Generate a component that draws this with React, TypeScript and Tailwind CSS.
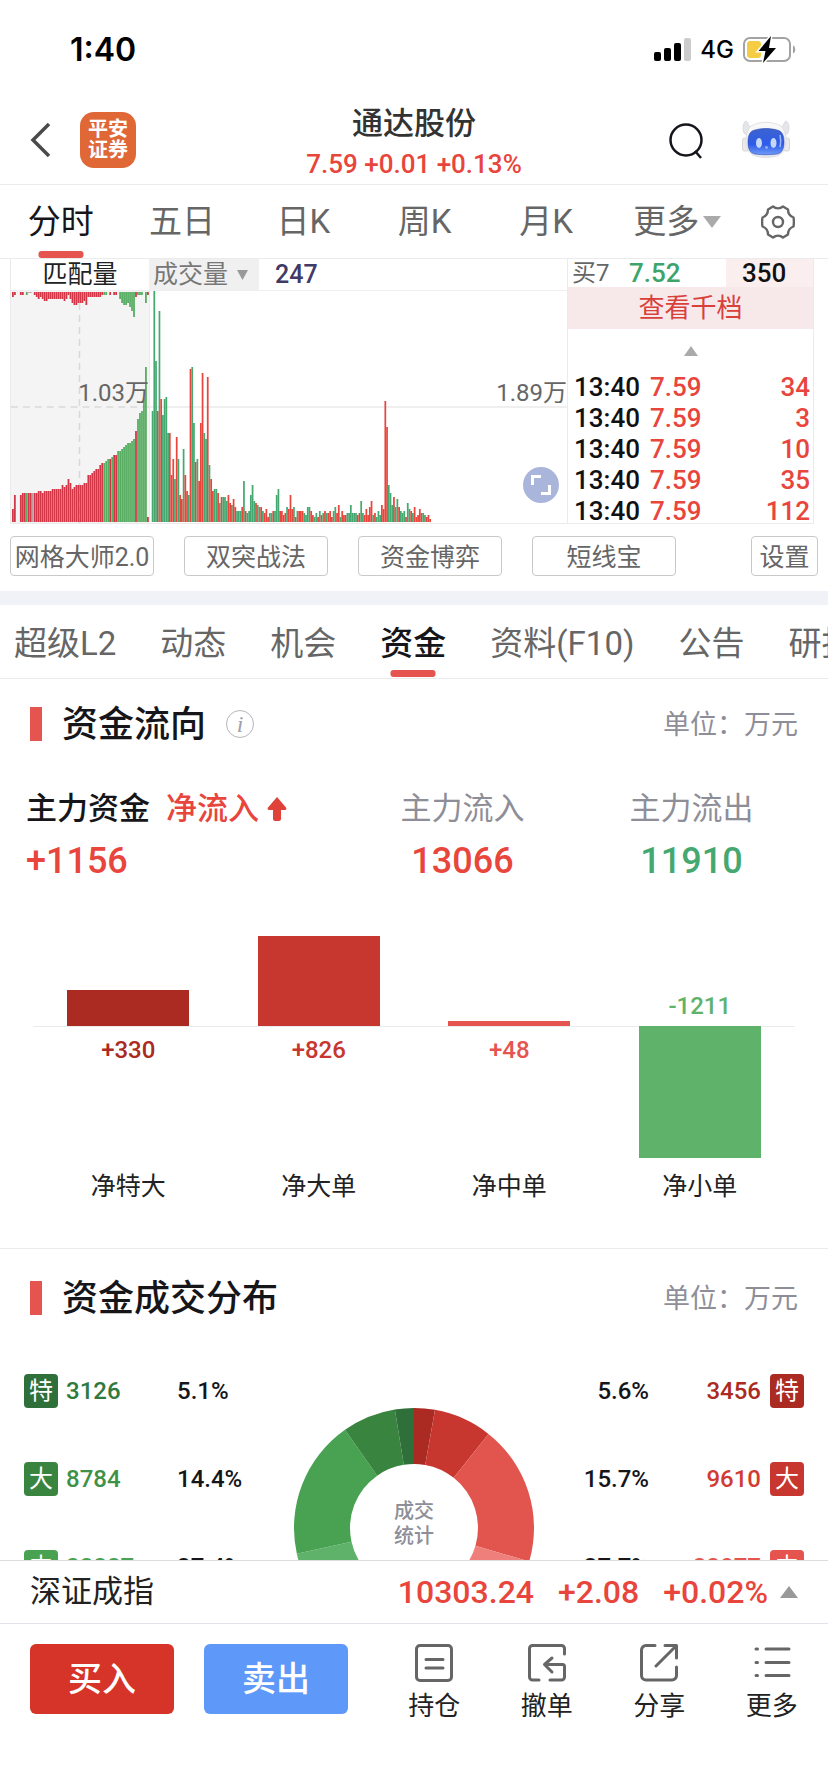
import clsx from "clsx";

const periods = ["分时", "五日", "日K", "周K", "月K"];

const strategies = ["网格大师2.0", "双突战法", "资金博弈", "短线宝"];

const sections = ["超级L2", "动态", "机会", "资金", "资料(F10)", "公告", "研报"];

const trades = [
  { key: "1", time: "13:40", price: "7.59", volume: "34" },
  { key: "2", time: "13:40", price: "7.59", volume: "3" },
  { key: "3", time: "13:40", price: "7.59", volume: "10" },
  { key: "4", time: "13:40", price: "7.59", volume: "35" },
  { key: "5", time: "13:40", price: "7.59", volume: "112" },
];

const flows = [
  { name: "净特大", value: 330, bar: "bg-[#ab2a21]", text: "text-[#ab2a21]" },
  { name: "净大单", value: 826, bar: "bg-[#c8372f]", text: "text-[#c8372f]" },
  { name: "净中单", value: 48, bar: "bg-[#e5544f]", text: "text-[#e5544f]" },
  { name: "净小单", value: -1211, bar: "bg-[#5fb26a]", text: "text-[#5fb26a]" },
];

const sells = [
  { label: "特", amount: "3126", percent: "5.1%", badge: "bg-[#2f6f3a]", text: "text-[#2f7a3c]" },
  { label: "大", amount: "8784", percent: "14.4%", badge: "bg-[#39843f]", text: "text-[#3f9148]" },
  { label: "中", amount: "22887", percent: "37.4%", badge: "bg-[#48a251]", text: "text-[#48a251]" },
];

const buys = [
  { label: "特", amount: "3456", percent: "5.6%", badge: "bg-[#ab2a21]", text: "text-[#ab2a21]" },
  { label: "大", amount: "9610", percent: "15.7%", badge: "bg-[#c8372f]", text: "text-[#d13b33]" },
  { label: "中", amount: "23077", percent: "37.7%", badge: "bg-[#e5544f]", text: "text-[#e5544f]" },
];

// Each side of the donut adds up to 100
const slices = [
  { percent: 5.6, color: "#ab2a21" },
  { percent: 15.7, color: "#c8372f" },
  { percent: 37.7, color: "#e2544e" },
  { percent: 41.0, color: "#ee7f7b" },
  { percent: 43.1, color: "#5fb26a" },
  { percent: 37.4, color: "#48a251" },
  { percent: 14.4, color: "#39843f" },
  { percent: 5.1, color: "#2f6f3a" },
];

// r = up, g = down, w = flat, followed by the bar height
const volumeBars =
  "g111 g231 g161 r111 g211 r123 g107 g123 g125 g89 r89 r47 r63 g43 r85 g63 r27 r23 g73 r47 r31 g27 r153 g155 g99 r60 g63 r41 r99 r149 g89 g83 r145 g57 r43 r31 g33 g33 r29 g19 r25 g25 g25 g21 r27 r19 g17 r23 r15 g11 g11 g11 r15 g41 r11 g9 g11 g27 g37 g21 r19 g17 g15 r15 g11 r9 r13 r5 g9 g9 r11 g11 g27 g33 r11 r11 r7 r9 g15 r13 r27 r13 g15 r5 g11 r11 r11 r11 g9 g7 g15 g15 r11 r7 g5 g9 r5 g11 r7 g9 r11 g9 r9 r11 r5 g11 g15 r9 r17 g5 r11 r7 r7 g9 g9 g17 g9 g9 g9 r7 r9 g21 g9 r7 r13 r7 r15 r21 g7 r9 g5 g11 g7 r17 r13 r121 r95 g37 g29 g17 r25 g15 g23 r15 g11 g9 g11 r5 g19 g13 r11 g9 r15 r5 r7 r13 r9 g9 g7 r5 r7 r3";

const matchBars =
  "r13 r27 r0 r0 r27 r29 r29 g29 r29 r29 w29 r29 r29 r31 r31 r29 r31 r31 r31 r31 r33 r33 r33 r33 r33 r37 r35 r37 r43 r39 r33 r35 r37 r37 r37 r37 r39 r39 r47 r47 r49 r51 r53 r53 r57 r59 g59 g61 g63 r63 g65 r67 r67 g71 g71 g73 g75 g77 g79 g79 g81 g83 r91 g103 g109 g111 g123 g155 r5";

const unmatchedBars =
  "r5 r3 r0 r0 r3 r3 r0 g3 w1 w1 r0 r3 r5 r7 r5 r7 r9 r9 r7 r7 r7 r7 r7 r7 r7 r7 r9 r7 r3 r7 r11 r13 r13 r11 r11 r11 r9 r13 r5 r5 r5 r5 r5 r5 r5 r3 g3 g3 g0 r3 g0 r3 r3 g0 g7 g11 g13 g13 g11 g15 g19 g25 r5 g3 g3 g3 g0 g11 r3";

function parseBars(data: string) {
  return data.split(" ").map((item) => ({ tone: item[0], height: Number(item.slice(1)) }));
}

function matchColor(tone: string) {
  if (tone === "g") return "#57ad62";
  return tone === "r" ? "#d13746" : "#b9a0a4";
}

function slicePath(from: number, to: number) {
  const point = (r: number, p: number) => {
    const a = (p / 200) * Math.PI * 2;
    return `${120 + r * Math.sin(a)} ${120 - r * Math.cos(a)}`;
  };
  return `M${point(120, from)}A120 120 0 0 1 ${point(120, to)}L${point(64, to)}A64 64 0 0 0 ${point(64, from)}Z`;
}

function StatusBar() {
  return (
    <div className="flex h-24 items-center justify-between pt-1 pr-8 pl-[70px] text-black">
      <span className="font-[Inter] text-[32px] font-semibold">1:40</span>
      <div className="flex items-center gap-2">
        <svg width="38" height="24" viewBox="0 0 38 24">
          <rect x="0" y="14" width="7" height="9" rx="2" />
          <rect x="10" y="10" width="7" height="13" rx="2" />
          <rect x="20" y="5" width="7" height="18" rx="2" />
          <rect x="30" y="0" width="7" height="23" rx="2" fill="#ccc" />
        </svg>
        <span className="font-[Inter] text-2xl font-medium">4G</span>
        <svg width="54" height="28" viewBox="0 0 54 28">
          <rect x="2" y="2" width="46" height="23" rx="6" fill="none" stroke="#a3a3a3" strokeWidth="2" />
          <rect x="5" y="5" width="14" height="17" rx="3" fill="#f5cd45" />
          <path d="M51 9.500c3 1 3 7 0 8z" fill="#a3a3a3" />
          <path d="M29 0 16.500 15h7L21 27l13-15h-7z" stroke="#fff" strokeWidth="3" />
          <path d="M29 0 16.500 15h7L21 27l13-15h-7z" />
        </svg>
      </div>
    </div>
  );
}

function RobotIcon() {
  return (
    <svg width="48" height="40" viewBox="0 0 48 40">
      <defs>
        <linearGradient id="face" x1="0" y1="0" x2="0" y2="1">
          <stop offset="0" stopColor="#3d63cf" />
          <stop offset="0.6" stopColor="#2f5bea" />
          <stop offset="1" stopColor="#6f9bf8" />
        </linearGradient>
        <linearGradient id="shell" x1="0" y1="0" x2="0" y2="1">
          <stop offset="0" stopColor="#fafafa" />
          <stop offset="1" stopColor="#e6e8ee" />
        </linearGradient>
      </defs>
      <path d="M2 13C0 8 1 3 4 1c2 1 2 4 4 6l4 1-6 8zM46 13c2-5 1-10-2-12-2 1-2 4-4 6l-4 1 6 8z" fill="#e4e6ea" stroke="#d3d5da" strokeWidth="0.8" />
      <rect x="0.500" y="18" width="6" height="13" rx="2" fill="#eceae9" stroke="#d0cfd0" strokeWidth="0.8" />
      <rect x="41.500" y="18" width="6" height="13" rx="2" fill="#eceae9" stroke="#d0cfd0" strokeWidth="0.8" />
      <path d="M9 6c9-5 21-5 30 0 3 3 5 8 5 13s-1 11-4 14c-6 6-26 6-32 0-3-3-4-9-4-14S6 9 9 6z" fill="url(#shell)" stroke="#d9dbe0" strokeWidth="0.8" />
      <path d="M13 10c7-2 15-2 22 0 5 1 7 5 7 12s-2 11-7 12c-7 1-15 1-22 0-5-1-7-5-7-12s2-11 7-12z" fill="url(#face)" stroke="#2a49b0" strokeWidth="0.6" />
      <path d="M38 15c1 4 1 8 0 12" fill="none" stroke="#9db7fb" strokeWidth="1.500" />
      <ellipse cx="17" cy="23" rx="3" ry="5" fill="#c3d9f7" />
      <ellipse cx="31.500" cy="23" rx="3" ry="5" fill="#c3d9f7" />
      <circle cx="24.500" cy="27.500" r="1.400" fill="#8fb0f5" />
    </svg>
  );
}

function Header() {
  return (
    <header className="flex h-[89px] items-center justify-between border-b border-[#ebebeb] px-[30px]">
      <div className="flex w-40 items-center gap-[29px]">
        <button aria-label="返回">
          <svg width="21" height="36" viewBox="0 0 21 36" fill="none" stroke="#4a4a4a" strokeWidth="3.500">
            <path d="M19 2 3 18l16 16" />
          </svg>
        </button>
        <span className="flex size-14 items-center justify-center rounded-[14px] bg-[#e06736] text-xl leading-[21px] font-bold text-white">
          平安
          <br />
          证券
        </span>
      </div>
      <div className="pt-2 text-center">
        <h1 className="text-[31px] leading-10 font-medium text-[#333]">通达股份</h1>
        <p className="text-[26px] leading-10 font-medium text-[#e8453c]">7.59 +0.01 +0.13%</p>
      </div>
      <div className="flex w-40 items-center justify-end gap-[39px] pr-2">
        <button aria-label="搜索">
          <svg width="34" height="37" viewBox="0 0 34 37" fill="none" stroke="#15151c" strokeWidth="2.500">
            <circle cx="17" cy="18" r="15.500" />
            <path d="m26 29 6 7" />
          </svg>
        </button>
        <button aria-label="智能助手">
          <RobotIcon />
        </button>
      </div>
    </header>
  );
}

function PeriodTabs() {
  return (
    <nav className="grid h-[74px] grid-cols-[repeat(6,1fr)_100px] border-b border-[#ebebeb] text-[33px] text-[#666]">
      {periods.map((period, i) => (
        <button key={period} className={clsx("relative", i === 0 && "text-[#16161a]")}>
          {period}
          {i === 0 && (
            <span className="absolute bottom-0 left-1/2 h-[7px] w-[45px] -translate-x-1/2 rounded-[3px] bg-[#e5544f]" />
          )}
        </button>
      ))}
      <button className="flex items-center justify-center gap-1 pl-5">
        更多
        <svg width="18" height="12" viewBox="0 0 18 12" fill="#aaa">
          <path d="M0 0h18L9 12z" />
        </svg>
      </button>
      <button className="flex items-center justify-center" aria-label="图表设置">
        <svg width="34" height="34" viewBox="0 0 34 34" fill="none" stroke="#666" strokeWidth="2.400" strokeLinejoin="round">
          <path d="M12 1.500c3 2.500 7 2.500 10 0l5 3c0 4 1.500 6.500 5.500 8q.8 4.500 0 9c-4 1.500-5.500 4-5.500 8l-5 3c-3-2.500-7-2.500-10 0l-5-3c0-4-1.500-6.500-5.500-8q-.8-4.500 0-9c4-1.500 5.500-4 5.500-8z" />
          <circle cx="17" cy="17" r="5" />
        </svg>
      </button>
    </nav>
  );
}

function VolumeChart() {
  return (
    <div className="min-w-0 flex-1 border-x border-b border-[#ebebeb]">
      <div className="flex h-8 items-center border-b border-[#efefef] text-[25px]">
        <h2 className="w-[138px] text-center text-[#222]">匹配量</h2>
        <label className="relative flex h-full items-center bg-[#f0f0f0]">
          <select className="w-[110px] appearance-none bg-transparent pl-1 text-[#777]" aria-label="指标">
            <option>成交量</option>
          </select>
          <svg className="pointer-events-none absolute right-[11px]" width="11" height="10" viewBox="0 0 11 10" fill="#999">
            <path d="M0 0h11L5.500 10z" />
          </svg>
        </label>
        <span className="pl-4 font-medium text-[#3f3a66]">247</span>
      </div>
      <div className="relative flex h-[232px]">
        <div className="relative w-[139px] border-r border-[#ebebeb] bg-[#f4f4f4]">
          <svg className="h-full w-full" viewBox="0 0 139 232" preserveAspectRatio="none">
            <path d="M69 0v232M0 116h139" stroke="#d9d9d9" strokeDasharray="7 5" strokeWidth="1.500" />
            {parseBars(matchBars).map((bar, i) => (
              <rect key={i} x={1 + i * 2} y={231 - bar.height} width="1.800" height={bar.height} fill={matchColor(bar.tone)} />
            ))}
            {parseBars(unmatchedBars).map((bar, i) => (
              <rect key={i} x={1 + i * 2} y="1" width="1.800" height={bar.height} fill={matchColor(bar.tone)} />
            ))}
          </svg>
          <span className="absolute top-[86px] right-0 text-2xl leading-8 text-[#666]">1.03万</span>
        </div>
        <div className="relative min-w-0 flex-1">
          <svg className="h-full w-full" viewBox="0 0 416 232" preserveAspectRatio="none">
            <path d="M0 116h416" stroke="#efefef" strokeWidth="2" />
            {parseBars(volumeBars).map((bar, i) => (
              <rect
                key={i}
                x={1.7 + i * 1.72}
                y={231 - bar.height}
                width="1.720"
                height={bar.height}
                fill={bar.tone === "g" ? "#45a871" : "#e8453c"}
              />
            ))}
          </svg>
          <span className="absolute top-[86px] right-0 text-2xl leading-8 text-[#666]">1.89万</span>
          <button className="absolute right-2 bottom-5 size-9 rounded-full bg-[#aab5db]" aria-label="全屏">
            <svg width="36" height="36" viewBox="0 0 36 36" fill="none" stroke="#fff" strokeWidth="3">
              <path d="M9.500 18V9.500H18M18 26.500h8.500V18" />
            </svg>
          </button>
        </div>
      </div>
    </div>
  );
}

function OrderBook() {
  return (
    <div className="flex w-[246px] flex-col border-r border-b border-[#ebebeb] text-[26px] font-medium">
      <div className="flex h-7 items-center">
        <span className="w-[61px] pl-1 text-2xl font-normal text-[#666]">买7</span>
        <span className="flex-1 text-[#3da56b]">7.52</span>
        <span className="flex h-full w-[87px] items-center bg-[#fbeeee] pl-4 text-[#111]">350</span>
      </div>
      <button className="h-[42px] bg-[#f7e9e9] font-normal text-[#d9403a]">查看千档</button>
      <div className="flex flex-1 items-center justify-center">
        <svg width="14" height="10" viewBox="0 0 14 10" fill="#aaa">
          <path d="M0 10h14L7 0z" />
        </svg>
      </div>
      <table className="-mb-1 w-full leading-[31px]">
        <tbody>
          {trades.map((trade) => (
            <tr key={trade.key} className="text-[#e8453c]">
              <td className="w-[82px] p-0 pl-[6px] text-[#111]">{trade.time}</td>
              <td className="p-0">{trade.price}</td>
              <td className="p-0 pr-[3px] text-right">{trade.volume}</td>
            </tr>
          ))}
        </tbody>
      </table>
    </div>
  );
}

function Strategies() {
  return (
    <div className="flex items-center px-[10px] pt-3 pb-[15px] text-[25px] text-[#666]">
      <div className="flex flex-1 gap-[30px]">
        {strategies.map((name) => (
          <button key={name} className="h-10 w-36 rounded border border-[#c9c9c9] pt-0.5 whitespace-nowrap">
            {name}
          </button>
        ))}
      </div>
      <button className="h-10 w-[67px] rounded border border-[#c9c9c9] pt-0.5">设置</button>
    </div>
  );
}

function SectionTabs() {
  return (
    <nav className="flex h-[74px] gap-11 overflow-hidden border-b border-[#ebebeb] pt-1 pl-[14px] text-[33px] text-[#666]">
      {sections.map((name) => (
        <button key={name} className={clsx("relative shrink-0", name === "资金" && "font-medium text-[#16161a]")}>
          {name}
          {name === "资金" && (
            <span className="absolute bottom-px left-1/2 h-[7px] w-[45px] -translate-x-1/2 rounded-[3px] bg-[#e5544f]" />
          )}
        </button>
      ))}
    </nav>
  );
}

function SectionTitle({ title, info }: { title: string; info?: boolean }) {
  return (
    <div className="flex h-[90px] items-center pr-[30px] pl-[30px]">
      <span className="h-[34px] w-3 bg-[#e5544f]" />
      <h2 className="ml-5 pt-0.5 text-4xl font-medium text-[#16161a]">{title}</h2>
      {info && (
        <button
          className="ml-5 size-7 rounded-full border border-[#b5b5be] font-['Liberation_Serif'] text-2xl leading-6 text-[#a0a0aa] italic"
          aria-label="说明"
        >
          i
        </button>
      )}
      <span className="ml-auto pt-0.5 text-[27px] text-[#8e8e98]">单位：万元</span>
    </div>
  );
}

function CapitalFlow() {
  return (
    <section className="border-b border-[#ebebeb]">
      <SectionTitle title="资金流向" info />
      <div className="grid grid-cols-[1fr_229px_229px] pt-5 pr-[22px] pl-[26px] text-center">
        <div className="text-left">
          <p className="flex items-center text-[31px] leading-10 font-medium text-[#16161a]">
            主力资金
            <span className="ml-4 text-[#e8453c]">净流入</span>
            <svg className="ml-2" width="20" height="24" viewBox="0 0 20 24" fill="#e0423a">
              <path d="M10 0 1 10.500c-1 1.500 0 2.500 1 2.500h4v9c0 1 1 2 2 2h4c1 0 2-1 2-2v-9h4c1 0 2-1 1-2.500z" />
            </svg>
          </p>
          <p className="text-4xl leading-[64px] font-medium text-[#e8453c]">+1156</p>
        </div>
        <div>
          <p className="text-[31px] leading-10 text-[#8e8e98]">主力流入</p>
          <p className="text-4xl leading-[64px] font-medium text-[#e8453c]">13066</p>
        </div>
        <div>
          <p className="text-[31px] leading-10 text-[#8e8e98]">主力流出</p>
          <p className="text-4xl leading-[64px] font-medium text-[#45a871]">11910</p>
        </div>
      </div>
      <div className="relative mx-[33px] grid grid-cols-4 pb-[41px] text-center text-2xl leading-10">
        <div className="absolute inset-x-0 top-[133px] h-px bg-[#ebebeb]" />
        {flows.map((flow) => {
          const height = Math.round(Math.abs(flow.value) * 0.109);
          const up = flow.value > 0;
          return (
            <div key={flow.name} className="relative">
              <div className="flex h-[133px] flex-col items-center justify-end">
                {up ? (
                  <div className={clsx("w-[122px]", flow.bar)} style={{ height }} />
                ) : (
                  <span className={clsx("font-medium", flow.text)}>{flow.value}</span>
                )}
              </div>
              <div className="flex h-[141px] flex-col items-center">
                {up ? (
                  <span className={clsx("pt-1 font-medium", flow.text)}>+{flow.value}</span>
                ) : (
                  <div className={clsx("w-[122px]", flow.bar)} style={{ height }} />
                )}
              </div>
              <p className="text-[25px] text-[#222]">{flow.name}</p>
            </div>
          );
        })}
      </div>
    </section>
  );
}

function Donut() {
  let start = 0;
  return (
    <div className="relative mt-[61px] size-60">
      <svg width="240" height="240" viewBox="0 0 240 240">
        {slices.map((slice) => {
          const from = start;
          start += slice.percent;
          return <path key={slice.color} d={slicePath(from, start)} fill={slice.color} />;
        })}
      </svg>
      <p className="absolute inset-0 flex items-center justify-center pb-2 text-xl leading-[25px] text-[#8e8e98]">
        成交
        <br />
        统计
      </p>
    </div>
  );
}

function Distribution() {
  return (
    <section className="pt-1">
      <SectionTitle title="资金成交分布" />
      <div className="grid grid-cols-[1fr_240px_1fr] pt-1 text-2xl font-medium text-[#16161a]">
        <div>
          {sells.map((row) => (
            <div key={row.label} className="flex h-22 items-center pl-6">
              <span className={clsx("flex size-[34px] items-center justify-center rounded font-normal text-white", row.badge)}>
                {row.label}
              </span>
              <span className={clsx("w-[119px] pl-2", row.text)}>{row.amount}</span>
              <span>{row.percent}</span>
            </div>
          ))}
        </div>
        <Donut />
        <div>
          {buys.map((row) => (
            <div key={row.label} className="flex h-22 items-center justify-end pr-6">
              <span>{row.percent}</span>
              <span className={clsx("w-[121px] pr-[9px] text-right", row.text)}>{row.amount}</span>
              <span className={clsx("flex size-[34px] items-center justify-center rounded font-normal text-white", row.badge)}>
                {row.label}
              </span>
            </div>
          ))}
        </div>
      </div>
    </section>
  );
}

const actions = [
  {
    name: "持仓",
    icon: (
      <>
        <rect x="1.500" y="1.500" width="35" height="35" rx="3.500" />
        <path d="M11 15.500h17M11 24h17" />
      </>
    ),
  },
  {
    name: "撤单",
    icon: (
      <>
        <path d="M36.500 10V4.500a3 3 0 0 0-3-3h-29a3 3 0 0 0-3 3v28.500a3 3 0 0 0 3 3H11" />
        <path d="M24 14l-7.500 6.500L24 28M17.500 20.500h17a2 2 0 0 1 2 2V33a3 3 0 0 1-3 3H22" />
      </>
    ),
  },
  {
    name: "分享",
    icon: (
      <>
        <path d="M15 1.500H6a4.500 4.500 0 0 0-4.500 4.500v25.500A4.500 4.500 0 0 0 6 36h26a4.500 4.500 0 0 0 4.500-4.500V23" />
        <path d="M25 1.500h11.500V14M36 2 16 22" />
      </>
    ),
  },
  {
    name: "更多",
    icon: <path d="M3 5h1.500M13 5h23M3 18.500h1.500M13 18.500h23M3 31.500h1.500M13 31.500h23" />,
  },
];

function BottomBar() {
  return (
    <footer className="shrink-0 bg-white">
      <div className="flex h-[63px] items-center border-t border-[#dcdcdc] pr-[30px] pl-[30px] text-[31px] text-[#222]">
        <span className="flex-1">深证成指</span>
        <span className="flex items-center gap-6 text-[32px] font-medium text-[#e8453c]">
          <span>10303.24</span>
          <span>+2.08</span>
          <span>+0.02%</span>
        </span>
        <svg className="ml-3" width="18" height="12" viewBox="0 0 18 12" fill="#999">
          <path d="M0 12h18L9 0z" />
        </svg>
      </div>
      <div className="flex border-t border-[#e2e3ea] pt-5 pb-[70px] pl-[30px]">
        <button className="h-[70px] w-36 rounded-md bg-[#d63429] text-[34px] font-medium text-white">买入</button>
        <button className="ml-[30px] h-[70px] w-36 rounded-md bg-[#5e98f8] text-[34px] font-medium text-white">卖出</button>
        <div className="ml-[30px] grid flex-1 grid-cols-4">
          {actions.map((action) => (
            <button key={action.name} className="flex flex-col items-center gap-2 text-[26px] leading-8 text-[#222]">
              <svg width="38" height="38" viewBox="0 0 38 38" fill="none" stroke="#666" strokeWidth="3" strokeLinecap="round" strokeLinejoin="round">
                {action.icon}
              </svg>
              {action.name}
            </button>
          ))}
        </div>
      </div>
    </footer>
  );
}

export default function App() {
  return (
    <div className="flex h-screen flex-col bg-white font-[Roboto,'Noto_Sans_CJK_SC',sans-serif]">
      <StatusBar />
      <Header />
      <main className="min-h-0 flex-1 overflow-y-auto [scrollbar-width:none]">
        <PeriodTabs />
        <div className="flex pr-[14px] pl-[10px]">
          <VolumeChart />
          <OrderBook />
        </div>
        <Strategies />
        <div className="h-[14px] bg-[#f1f2f7]" />
        <SectionTabs />
        <CapitalFlow />
        <Distribution />
      </main>
      <BottomBar />
    </div>
  );
}
